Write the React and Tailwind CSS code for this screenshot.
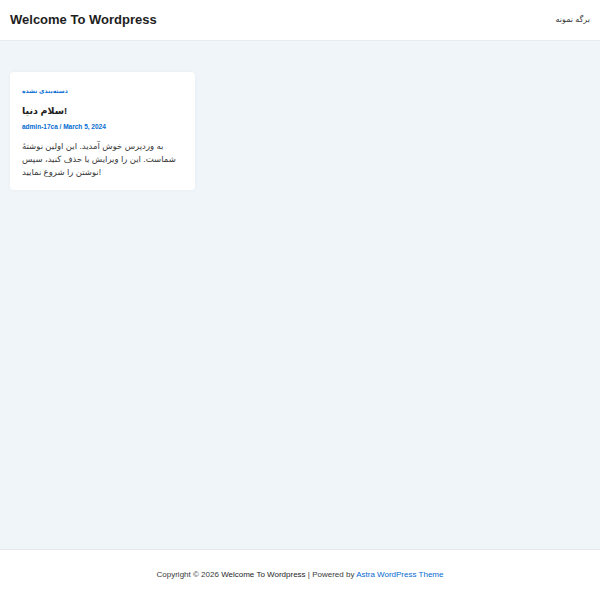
export default function App() {
  return (
    <div className="flex min-h-screen flex-col bg-[#f0f5fa] font-['Liberation_Sans','DejaVu_Sans',sans-serif] text-[#3a3a3a]">
      {/* Header */}
      <header className="flex h-[41px] items-center justify-between border-b border-[#e8ecf0] bg-white px-[10px]">
        <div className="text-[13px] font-bold text-[#1e1e1e]">Welcome To Wordpress</div>
        <nav className="text-[8px] text-[#3a3a3a]">برگه نمونه</nav>
      </header>

      {/* Posts */}
      <main className="flex-1 px-[10px] pt-[31px]">
        <article className="w-[185px] rounded-[4px] bg-white px-[12px] pb-[11px] pt-[14px] shadow-[0_0_4px_rgba(0,0,0,0.04)]">
          <div className="text-[6px] font-bold leading-[10px] text-[#046bd2]">دسته‌بندی نشده</div>
          <h2 className="mt-[8px] text-[9.5px] font-bold leading-[14px] text-[#1e1e1e]">سلام دنیا!</h2>
          <div className="mt-[4px] text-[6.5px] font-bold leading-[10px] text-[#046bd2]">admin-17ca / March 5, 2024</div>
          <p className="mt-[8px] text-[8.5px] leading-[13px] text-[#3a3a3a]">
            به وردپرس خوش آمدید. این اولین نوشتهٔ شماست. این را ویرایش یا حذف کنید، سپس نوشتن را شروع نمایید!
          </p>
        </article>
      </main>

      {/* Footer */}
      <footer className="flex h-[51px] items-center justify-center border-t border-[#e5e7eb] bg-white text-[8px] text-[#3a3a3a]">
        <span>
          Copyright © 2026 <span className="text-[#1e1e1e]">Welcome To Wordpress</span> | Powered by{' '}
          <span className="text-[#046bd2]">Astra WordPress Theme</span>
        </span>
      </footer>
    </div>
  )
}
